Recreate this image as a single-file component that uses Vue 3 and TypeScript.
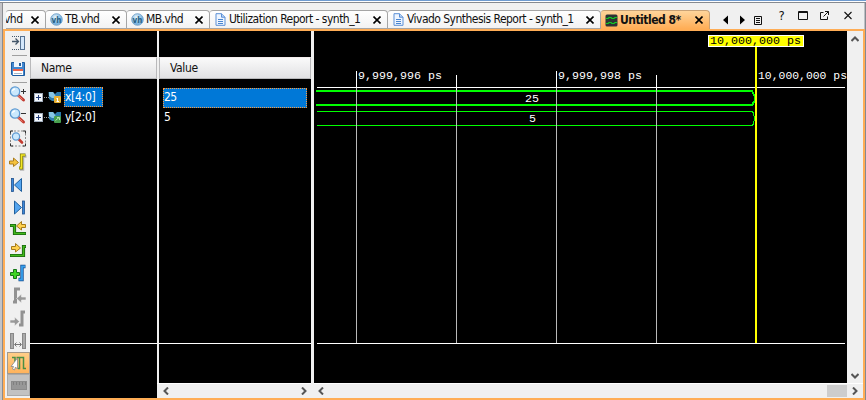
<script setup lang="ts">
interface Tab { label: string; kind: 'vhd' | 'doc' | 'wave'; width: number; clipped?: boolean; cls?: string }

const tabs: Tab[] = [
  { label: 'vhd', kind: 'vhd', width: 40, clipped: true, cls: 'clipped' },
  { label: 'TB.vhd', kind: 'vhd', width: 81 },
  { label: 'MB.vhd', kind: 'vhd', width: 83 },
  { label: 'Utilization Report - synth_1', kind: 'doc', width: 178 },
  { label: 'Vivado Synthesis Report - synth_1', kind: 'doc', width: 213 },
  { label: 'Untitled 8*', kind: 'wave', width: 109, cls: 'active' },
]

const signals = [
  { name: 'x[4:0]', value: '25', badge: '#e8b030', selected: true },
  { name: 'y[2:0]', value: '5', badge: '#48a050', selected: false },
]

const gridLines = [
  { x: 42, top: 40 },
  { x: 142, top: 44 },
  { x: 242, top: 40 },
  { x: 342, top: 44 },
]
</script>

<template>
  <div class="window">
    <div class="tabbar">
      <div v-for="t in tabs" :key="t.label" class="tab" :class="t.cls" :style="{ width: t.width + 'px' }">
        <template v-if="!t.clipped">
          <svg v-if="t.kind === 'vhd'" class="ticon" width="13" height="13" viewBox="0 0 13 13">
            <defs><radialGradient id="ball" cx=".4" cy=".3"><stop offset="0" stop-color="#e4f3fc" /><stop offset="1" stop-color="#7db5df" /></radialGradient></defs>
            <circle cx="6.5" cy="6.5" r="5.8" fill="url(#ball)" stroke="#6698c4" stroke-width=".8" />
            <text x="6.4" y="9.6" text-anchor="middle" class="vh">vh</text>
          </svg>
          <svg v-else-if="t.kind === 'doc'" class="ticon" width="13" height="13" viewBox="0 0 13 13">
            <path d="M2 .7H7.5L11 4.2V12.3H2Z" fill="#eef5ff" stroke="#5a8fd6" />
            <path d="M7.5 .7V4.2H11" fill="#b9d4f5" stroke="#5a8fd6" />
            <path d="M4 6.5H9M4 8.5H9M4 10.5H9" stroke="#4a86d0" />
          </svg>
          <svg v-else class="ticon" width="13" height="13" viewBox="0 0 13 13">
            <rect x=".5" y=".5" width="12" height="12" rx="1.5" fill="#2d3434" />
            <path d="M1 4.500H3L4 3.500H6L7 4.500H9L10 3.500H12M1 9.500H3L4 8.500H6L7 9.500H9L10 8.500H12" fill="none" stroke="#12d020" stroke-width="1.2" />
          </svg>
        </template>
        <span class="tlabel">{{ t.label }}</span>
        <svg class="close" width="8" height="8" viewBox="0 0 8 8"><path d="M.5 .5L7.5 7.5M7.5 .5L.5 7.5" stroke="#000" stroke-width="1.6" /></svg>
      </div>
      <svg class="controls" width="153" height="28" viewBox="0 0 153 28">
        <path d="M18 15.500V24.500L13 20ZM30 15.500V24.500L35 20Z" fill="#000" transform="translate(0 -1)" />
        <path d="M44.500 15.500H51.500V23.500H44.500ZM46 17.500H50M46 19.500H50M46 21.500H50" fill="none" stroke="#111" />
        <text x="68.500" y="19" class="help">?</text>
        <path d="M88.500 10.500H97.500V18.500H88.500ZM88 11.500H98" fill="none" stroke="#111" />
        <path d="M113.500 11.500H110.500V18.500H117.500V15.500M113.500 15.500L118.500 10.500M115 10.500H118.500V14" fill="none" stroke="#111" />
        <path d="M134.500 11L141.500 18M141.500 11L134.500 18" stroke="#111" stroke-width="1.100" />
      </svg>
    </div>

    <div class="workspace">
      <div class="toolbar">
        <svg class="h24" width="25" height="22" viewBox="0 0 25 22">
          <path d="M7 4.500H16M7 17.500H16" stroke="#46596c" stroke-dasharray="1 1" />
          <path d="M7 9.500H13M10.500 6.500L13.500 9.500L10.500 12.500" fill="none" stroke="#44576a" stroke-width="1.300" />
          <rect x="15.500" y="4.500" width="4" height="13" fill="#d5e8fb" stroke="#557191" />
        </svg>
        <i class="rule" />
        <svg class="h26" width="25" height="22" viewBox="0 0 25 22">
          <path d="M6.500 4.500H19.500V17.500H7.500L6.500 16.500Z" fill="#4287cf" stroke="#1f5c9f" />
          <rect x="9" y="4" width="8" height="5" fill="#eef5fc" /><rect x="14" y="5" width="2" height="3" fill="#285d97" />
          <rect x="8" y="11" width="10" height="6" fill="#fff" /><rect x="8" y="11" width="10" height="2" fill="#ed6248" /><path d="M9 15.500H17" stroke="#a8b7c8" />
        </svg>
        <i class="rule" />
        <svg v-for="z in ['in', 'out']" :key="z" class="h22" width="25" height="22" viewBox="0 0 25 22">
          <path d="M13 12L18.500 17" stroke="#c33b30" stroke-width="3" stroke-linecap="round" />
          <path d="M13 12.500L17.500 16.500" stroke="#f08a78" />
          <circle cx="10" cy="8.500" r="4.700" fill="#cae8fd" stroke="#5e9ad2" stroke-width="1.300" />
          <path d="M7.500 8A2.500 2.500 0 0 1 10 6" fill="none" stroke="#fff" stroke-width="1.300" />
          <path d="M16 8.500H21" stroke="#333" /><path v-if="z === 'in'" d="M18.500 6V11" stroke="#333" />
        </svg>
        <svg class="h23" width="25" height="22" viewBox="0 0 25 22">
          <rect x="5.500" y="3.500" width="15" height="15" fill="none" stroke="#888" stroke-dasharray="2 1.500" />
          <path d="M5.500 6V3.500H8M18 3.500H20.500V6M5.500 16V18.500H8M18 18.500H20.500V16" fill="none" stroke="#333" />
          <path d="M14 12L17 15" stroke="#c33b30" stroke-width="2.600" stroke-linecap="round" />
          <circle cx="11" cy="9" r="3.600" fill="#cae8fd" stroke="#5e9ad2" stroke-width="1.200" />
        </svg>
        <svg class="h23" width="25" height="22" viewBox="0 0 25 22">
          <path d="M15 19H18V6H21.500" fill="none" stroke="#b5b5b5" stroke-width="2.500" />
          <path d="M14 17.500H16.500V4.500H20.500" fill="none" stroke="#77750d" stroke-width="3.200" /><path d="M14.500 17.500H16.500V4.500H20" fill="none" stroke="#f5e724" stroke-width="1.700" />
          <path d="M4.500 10.500H8.500V7.500L13.500 12L8.500 16V13.500H4.500Z" fill="#f5c33e" stroke="#aa7d21" />
        </svg>
        <svg class="h23" width="25" height="22" viewBox="0 0 25 22"><rect x="6.500" y="5" width="2" height="13" fill="#3c88d9" stroke="#20528e" stroke-width=".8" /><path d="M16.500 5V18L9.500 11.500Z" fill="#55a5ef" stroke="#20609e" /></svg>
        <svg class="h22" width="25" height="22" viewBox="0 0 25 22"><rect x="17.500" y="5" width="2" height="13" fill="#3c88d9" stroke="#20528e" stroke-width=".8" /><path d="M9.500 5V18L16.500 11.500Z" fill="#55a5ef" stroke="#20609e" /></svg>
        <svg class="h22" width="25" height="22" viewBox="0 0 25 22">
          <path d="M5 7.500H9.500V15.500H21" fill="none" stroke="#176512" stroke-width="3.200" /><path d="M5.500 7.500H9.500V15.500H20.500" fill="none" stroke="#43b91c" stroke-width="1.500" />
          <path d="M20.500 6.500H16.500V3.500L11.500 8L16.500 12V9.500H20.500Z" fill="#ffd14e" stroke="#a57a1a" />
        </svg>
        <svg class="h22" width="25" height="22" viewBox="0 0 25 22">
          <path d="M5 15.500H18.500V6.500H21" fill="none" stroke="#176512" stroke-width="3.200" /><path d="M5.500 15.500H18.500V6.500H20.500" fill="none" stroke="#43b91c" stroke-width="1.500" />
          <path d="M6.500 6.500H10.500V3.500L15.500 8L10.500 12V9.500H6.500Z" fill="#ffd14e" stroke="#a57a1a" />
        </svg>
        <svg class="h22" width="25" height="22" viewBox="0 0 25 22">
          <path d="M13.500 17.500H17V4.500H20.500" fill="none" stroke="#164e91" stroke-width="3.400" /><path d="M14 17.500H17V4.500H20" fill="none" stroke="#36a0ee" stroke-width="1.800" />
          <path d="M8.500 8.500H11.500V11.500H14.500V14.500H11.500V17.500H8.500V14.500H5.500V11.500H8.500Z" fill="#3ed424" stroke="#147716" transform="translate(0 -1)" />
        </svg>
        <svg class="h23" width="25" height="22" viewBox="0 0 25 22"><path d="M15 4.500H10.500V17.500H8" fill="none" stroke="#929292" stroke-width="3" /><path d="M21 12.500H16.500V9.500L11.500 14L16.500 18.500V15.500H21Z" fill="#999" stroke="#f0f0f0" stroke-width=".6" /></svg>
        <svg class="h23" width="25" height="22" viewBox="0 0 25 22"><path d="M14 17.500H17V4.500H20" fill="none" stroke="#929292" stroke-width="3" /><path d="M5 12.500H9.500V9.500L14.500 14L9.500 18.500V15.500H5Z" fill="#999" stroke="#f0f0f0" stroke-width=".6" /></svg>
        <svg class="h22" width="25" height="22" viewBox="0 0 25 22"><rect x="5.500" y="3.500" width="3" height="15" fill="#aaa" stroke="#888" /><rect x="17.500" y="3.500" width="3" height="15" fill="#aaa" stroke="#888" /><path d="M10 14.500H16M11.500 12.500L9.500 14.500L11.500 16.500M14.500 12.500L16.500 14.500L14.500 16.500" fill="none" stroke="#777" /></svg>
        <div class="toolbtn on">
          <svg width="20" height="20" viewBox="0 0 20 20"><path d="M3 4.500H6V14M11 4.500H7.500M9 15.500H10.500V4.500H14.500V15.500H17" fill="none" stroke="#4a8f45" stroke-width="1.500" /><path d="M8.500 5V16L6.500 14L5.500 17L3.500 16L4.500 13.500H2Z" fill="#fff" stroke="#888" stroke-width=".8" /></svg>
        </div>
        <div class="toolbtn off">
          <svg width="20" height="19" viewBox="0 0 20 19"><rect x="2.500" y="5.500" width="15" height="8" fill="#979797" stroke="#8b8b8b" /><path d="M4.500 6V9M7.500 6V9M10.500 6V9M13.500 6V9M16.500 6V9" stroke="#7f7f7f" /></svg>
        </div>
      </div>

      <div class="names">
        <div class="header">Name</div>
        <div class="rows">
          <div v-for="s in signals" :key="s.name" class="row">
            <svg width="28" height="16" viewBox="0 0 28 16">
              <rect x=".500" y="4.500" width="8" height="8" fill="#f3f7fc" stroke="#a0acbb" />
              <path d="M2 8.500H7M4.500 6V11" stroke="#223d78" /><path d="M10 8.500H15" stroke="#999" stroke-dasharray="1 1" />
              <path d="M14.500 3H19L21 5L23 3H27V9L22 12H18L15 10Z" fill="#2d7cae" /><path d="M15 3H19L23 9H18L15 7Z" fill="#87c6e5" />
              <rect x="20" y="7" width="7" height="7" rx="1" :fill="s.badge" /><path v-if="s.selected" d="M23.500 9V12M22.500 9.500H23.500M22.500 12.500H25" stroke="#fff" /><path v-else d="M21.500 11.500L25 8.500M23 8.500H25.500V11" fill="none" stroke="#b2e7ac" />
            </svg>
            <span class="signal" :class="{ selected: s.selected }">{{ s.name }}</span>
          </div>
        </div>
        <div class="baseline" />
      </div>

      <div class="values">
        <div class="header">Value</div>
        <div class="rows">
          <div v-for="s in signals" :key="s.name" class="row"><span class="val" :class="{ selected: s.selected }">{{ s.value }}</span></div>
        </div>
        <div class="baseline" />
        <div class="hscroll">
          <svg width="6" height="8" viewBox="0 0 6 8"><path d="M5 .5L1.500 4L5 7.500" class="chev" /></svg>
          <svg width="6" height="8" viewBox="0 0 6 8"><path d="M1 .5L4.500 4L1 7.500" class="chev" /></svg>
        </div>
      </div>

      <div class="wave">
        <div class="wavetop">
          <svg class="plot" width="533" height="352" viewBox="0 0 533 352">
            <g shape-rendering="crispEdges">
              <g v-for="g in gridLines" :key="g.x">
                <rect :x="g.x" y="57" width="1" height="255" fill="#b9b9b9" />
                <rect :x="g.x" :y="g.top" width="1" height="17" fill="#fff" />
              </g>
              <rect x="3" y="56" width="528" height="1" fill="#fff" />
              <rect x="3" y="312" width="528" height="1" fill="#fff" />
              <path d="M2 60H438L440 64L441 66V69L440 71L438 74H2" fill="none" stroke="#0f0" stroke-width="2" />
              <path d="M3 80.500H438.500L439.500 82.500V84L440.500 86V89L439.500 91V92.500L438.500 94.500H3" fill="none" stroke="#0f0" />
              <g v-for="g in gridLines" :key="g.x"><rect :x="g.x" y="59" width="1" height="38" fill="#b9b9b9" /></g>
              <rect x="441" y="16" width="2" height="296" fill="#ff0" />
              <rect x="394.500" y="4.500" width="95" height="11" fill="#ff0" stroke="#fff" />
            </g>
            <g class="mono">
              <text x="44" y="48" textLength="84">9,999,996 ps</text>
              <text x="244" y="48" textLength="84">9,999,998 ps</text>
              <text x="444" y="48" textLength="89" lengthAdjust="spacingAndGlyphs">10,000,000 ps</text>
              <text x="211" y="71" textLength="14">25</text>
              <text x="215" y="91">5</text>
              <text x="396" y="13" textLength="91" class="dark">10,000,000 ps</text>
            </g>
          </svg>
          <div class="vscroll">
            <svg width="8" height="6" viewBox="0 0 8 6"><path d="M.5 5L4 1.500L7.500 5" class="chev" /></svg>
            <svg width="8" height="6" viewBox="0 0 8 6"><path d="M.5 1L4 4.500L7.500 1" class="chev" /></svg>
          </div>
        </div>
        <div class="hscroll">
          <svg width="6" height="8" viewBox="0 0 6 8"><path d="M5 .5L1.500 4L5 7.500" class="chev" /></svg>
          <i class="thumb" />
          <svg width="6" height="8" viewBox="0 0 6 8"><path d="M1 .5L4.500 4L1 7.500" class="chev" /></svg>
        </div>
      </div>
    </div>
  </div>
</template>

<style>
body { margin: 0; overflow: hidden; }
</style>
<style scoped>
* { box-sizing: border-box; }
svg { display: block; flex: none; }
.window { width: 866px; height: 400px; background: #f0f0f0; border-top: 1px solid #6e9bd0; padding-left: 2px; font: 12px "DejaVu Sans Condensed", "DejaVu Sans", sans-serif; font-stretch: condensed; color: #111; display: flex; flex-direction: column; box-shadow: inset 0 1px #fff, inset 0 2px #858990, inset 2px 0 #c4c4c8, inset 3px 0 #8a8c91, inset -1px 0 #858990, inset -2px 0 #bcc0c5; }
.tabbar { height: 28px; display: flex; align-items: flex-end; padding-left: 4px; }
.tab { height: 19px; flex: none; border: 1px solid #a5a5a5; border-width: 1px 1px 1px 0; border-radius: 3px 4px 0 0; background: linear-gradient(#fff, #f2f2f2); display: flex; align-items: center; padding: 0 6px 0 4px; overflow: hidden; white-space: nowrap; }
.ticon { margin-right: 2px; }
.tlabel { letter-spacing: -.53px; line-height: 17px; }
.close { margin-left: auto; }
.clipped { padding-left: 0; }
.clipped .tlabel { margin-left: -2px; }
.active { background: linear-gradient(#ffd59b, #ffad55); font-weight: bold; border-color: #c9a276; border-bottom: 0; }
.active .tlabel { letter-spacing: -.5px; }
.vh { font: bold 8px "DejaVu Sans Condensed", sans-serif; fill: #286083; }
.help { font: 13px "DejaVu Sans Condensed", sans-serif; fill: #111; }
.workspace { width: 862px; height: 371px; margin-left: 1px; border: 2px solid #ffad55; display: flex; flex: none; background: #000; }
.toolbar { width: 25px; background: #f0f0f0; display: flex; flex-direction: column; align-items: stretch; flex: none; }
.h22 { height: 22px; } .h23 { height: 23px; } .h24 { height: 24px; } .h26 { height: 26px; }
.rule { height: 1px; width: 15px; margin-left: 7px; background: #a0a0a0; }
.toolbtn { width: 23px; height: 22px; margin-left: 2px; border: 1px solid #aaa; display: flex; align-items: center; justify-content: center; flex: none; }
.on { background: linear-gradient(#ffce88, #ffb35c); border-color: #a49888; }
.off { background: #c2c2c2; }
.names { width: 127px; padding-top: 26px; flex: none; }
.header { height: 22px; background: linear-gradient(#fafafa, #e1e1e3); border: 1px solid #b9b9bb; border-top-color: #f4eeee; line-height: 20px; padding-left: 10px; letter-spacing: -.35px; }
.rows { padding-top: 9px; height: 264px; }
.row { height: 20px; display: flex; align-items: center; }
.names .row { padding-left: 4px; }
.names .rows { padding-top: 8px; }
.signal { height: 20px; line-height: 20px; padding: 0 1px; margin-left: 2px; color: #fff; width: 39px; white-space: nowrap; letter-spacing: -.3px; }
.selected { background: #0078d7; outline: 1px dotted #ff9b3e; outline-offset: -1px; }
.baseline { height: 1px; background: #fff; }
.values { width: 154px; flex: none; padding-top: 26px; border-left: 2px solid #f0f0f0; }
.val { color: #fff; width: 144px; height: 20px; line-height: 19px; margin-left: 4px; padding-left: 1px; letter-spacing: -.7px; }
.values .hscroll { margin-top: 39px; margin-left: -2px; }
.hscroll { height: 15px; background: #f0f0f0; border-top: 1px solid #fff; display: flex; align-items: center; justify-content: space-between; padding: 0 4px 0 6px; }
.chev { fill: none; stroke: #555; stroke-width: 2; }
.wave { width: 552px; flex: none; border-left: 3px solid #f0f0f0; }
.wavetop { display: flex; height: 352px; }
.plot { background: #000; }
.vscroll { width: 16px; flex: none; height: 352px; background: #f0f0f0; display: flex; flex-direction: column; justify-content: space-between; padding: 5px 4px 4px; }
.wave .hscroll { padding-left: 4px; padding-right: 5px; }
.thumb { align-self: stretch; width: 20px; background: #cdcdcd; margin: 1px 5px 1px auto; }
.mono { font: 11.670px "Liberation Mono", monospace; fill: #fff; }
.dark { fill: #000; }
</style>
